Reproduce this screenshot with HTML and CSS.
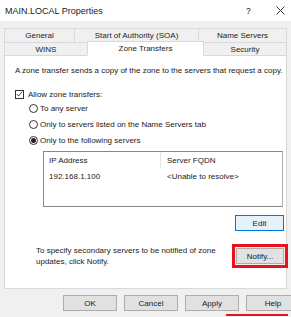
FILE: index.html
```html
<!DOCTYPE html>
<html>
<head>
<meta charset="utf-8">
<link rel="stylesheet" href="styles.css">
</head>
<body>
<div class="dialog">
  <div class="titlebar">
    <span class="title">MAIN.LOCAL Properties</span>
    <span class="help">?</span>
    <span class="close">
      <svg width="9" height="9" viewBox="0 0 9 9"><path d="M0.5 0.5 L8.5 8.5 M8.5 0.5 L0.5 8.5" stroke="#222" stroke-width="0.9" fill="none"/></svg>
    </span>
  </div>
  <div class="tabs">
    <div class="tabrow back">
      <div class="tab t-general">General</div>
      <div class="tab t-soa">Start of Authority (SOA)</div>
      <div class="tab t-ns">Name Servers</div>
    </div>
    <div class="tabrow front">
      <div class="tab t-wins">WINS</div>
      <div class="tab t-zone active">Zone Transfers</div>
      <div class="tab t-sec">Security</div>
    </div>
  </div>
  <div class="panel">
    <p class="desc">A zone transfer sends a copy of the zone to the servers that request a copy.</p>
    <div class="check">
      <span class="box"><svg width="8" height="8" viewBox="0 0 8 8"><path d="M1 4.2 L3 6.3 L7 1.3" stroke="#222" stroke-width="0.9" fill="none"/></svg></span>
      <span>Allow zone transfers:</span>
    </div>
    <div class="radios">
      <div class="radio"><span class="circle"></span><span>To any server</span></div>
      <div class="radio"><span class="circle"></span><span>Only to servers listed on the Name Servers tab</span></div>
      <div class="radio"><span class="circle on"></span><span>Only to the following servers</span></div>
    </div>
    <div class="list">
      <div class="lhead"><span class="c1">IP Address</span><span class="c2">Server FQDN</span></div>
      <div class="lrow"><span class="c1">192.168.1.100</span><span class="c2">&lt;Unable to resolve&gt;</span></div>
    </div>
    <div class="lower">
      <div class="editrow"><button class="btn edit">Edit</button></div>
      <div class="notifyrow">
        <p class="ntext">To specify secondary servers to be notified of zone<br>updates, click Notify.</p>
        <div class="redbox"><button class="btn">Notify...</button></div>
      </div>
    </div>
  </div>
  <div class="footer">
    <button class="btn fbtn">OK</button>
    <button class="btn fbtn">Cancel</button>
    <button class="btn fbtn">Apply</button>
    <button class="btn fbtn">Help</button>
  </div>
  <div class="redline"></div>
</div>
</body>
</html>
```
FILE: styles.css
```css
* { box-sizing: border-box; }
html, body { margin: 0; padding: 0; }
body {
  width: 291px;
  height: 317px;
  overflow: hidden;
  background: #f0f0f0;
  font-family: "Liberation Sans", Arial, sans-serif;
  font-size: 8px;
  color: #1a1a1a;
}
.dialog { position: relative; width: 291px; height: 317px; }
.titlebar {
  height: 21px;
  background: #fff;
  display: flex;
  align-items: center;
  padding-left: 5px;
  font-size: 9px;
  color: #222;
}
.title { flex: 1; }
.help { width: 10px; margin-right: 20px; font-size: 8.5px; }
.close { width: 9px; margin-right: 6px; display: flex; }
.tabs { padding: 7px 0 0 4px; }
.tabrow { display: flex; height: 14px; }
.tab {
  display: flex;
  align-items: center;
  justify-content: center;
  border: 1px solid #d9d9d9;
  border-right: none;
  background: #f0f0f0;
  color: #222;
}
.back .tab { border-bottom: none; }
.tab:last-child { border-right: 1px solid #d9d9d9; }
.t-general { width: 70px; }
.t-soa { width: 124px; }
.t-ns { width: 89px; }
.t-wins { width: 83px; }
.t-zone { width: 117px; }
.t-sec { width: 83px; }
.tab.active {
  background: #fff;
  border-color: #d9d9d9;
  border-bottom-color: #fff;
  height: 15px;
  margin-top: -1px;
  position: relative;
  z-index: 1;
  border-right: 1px solid #d9d9d9;
}
.tab.active + .tab { border-left: none; }
.panel {
  margin-left: 4px;
  width: 283px;
  height: 234px;
  margin-top: -1px;
  background: #fff;
  border: 1px solid #d9d9d9;
  padding: 9px 0 0 10px;
}
.desc { margin: 0; height: 12px; line-height: 12px; }
.check {
  margin-top: 12px;
  display: flex;
  align-items: center;
  gap: 4px;
  height: 10px;
}
.box {
  width: 9px; height: 9px;
  border: 1px solid #333;
  display: flex; align-items: center; justify-content: center;
  background: #fff;
}
.radios { padding-left: 14px; margin-top: 1px; }
.radio { display: flex; align-items: center; gap: 2px; height: 16px; }
.circle {
  width: 9px; height: 9px;
  border: 1px solid #333;
  border-radius: 50%;
  display: flex; align-items: center; justify-content: center;
}
.circle.on::after {
  content: "";
  width: 5px; height: 5px;
  border-radius: 50%;
  background: #222;
}
.list {
  margin: 3px 0 0 28px;
  width: 240px;
  height: 56px;
  border: 1px solid #828790;
  border-right-color: #b0b0b0;
}
.lhead, .lrow { display: flex; height: 15px; align-items: center; }
.lhead { height: 17px; }
.lhead .c1 { width: 117px; padding-left: 5px; border-right: 1px solid #e5e5e5; height: 17px; display: flex; align-items: center; }
.lrow .c1 { width: 117px; padding-left: 5px; }
.c2 { padding-left: 6px; }
.lower { padding-right: 2px; }
.editrow { display: flex; justify-content: flex-end; margin-top: 8px; }
.btn {
  font-family: "Liberation Sans", Arial, sans-serif;
  font-size: 8px;
  color: #1a1a1a;
  background: #e1e1e1;
  border: 1px solid #adadad;
  width: 49px;
  height: 16px;
  padding: 0;
  margin: 0;
}
.btn.edit { border-color: #0078d7; background: #e5f1fb; }
.notifyrow {
  display: flex;
  align-items: center;
  justify-content: space-between;
  margin-top: 13px;
  padding-left: 21px;
}
.ntext { margin: 0; line-height: 11px; }
.redbox {
  border: 3px solid #e8111d;
  padding: 1px;
  margin-right: -4px;
  background: #f0f0f0;
}
.redbox .btn { width: 48px; }
.footer {
  display: flex;
  gap: 7px;
  padding: 6px 0 0 63px;
}
.fbtn { width: 54px; flex: none; }
.redline {
  position: absolute;
  left: 226px; top: 314px;
  width: 62px; height: 2px;
  background: #e8111d;
}
```
